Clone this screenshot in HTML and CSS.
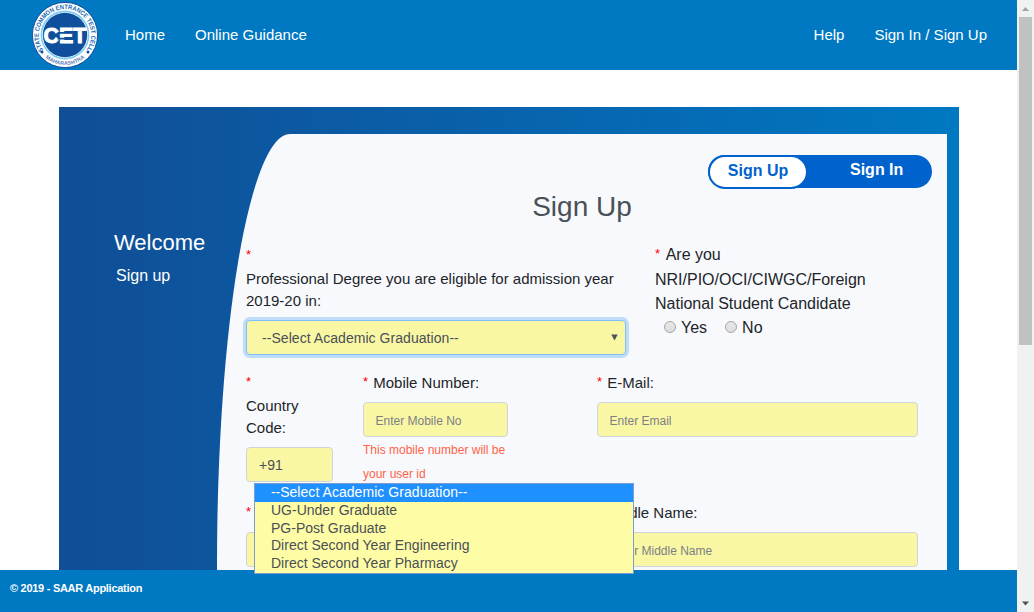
FILE: index.html
```html
<!DOCTYPE html>
<html lang="en">
<head>
<meta charset="utf-8">
<title>Sign Up</title>
<link rel="stylesheet" href="styles.css">
</head>
<body>
<div class="page">
  <header class="topbar">
    <svg class="logo" width="68" height="68" viewBox="-34 -34 68 68">
      <defs>
        <path id="arcTop" d="M-20.2 16.9 A26.2 26.2 0 1 1 20.2 16.9"/>
        <path id="arcBottom" d="M-22.2 20.3 A30.1 30.1 0 0 0 22.2 20.3"/>
      </defs>
      <circle r="32.6" fill="#fff" stroke="#1450a0" stroke-width="1"/>
      <circle r="23.6" fill="none" stroke="#7fcdf2" stroke-width="1.6"/>
      <circle r="22.2" fill="#0f4f9b"/>
      <text class="ring-text"><textPath href="#arcTop" textLength="113" lengthAdjust="spacingAndGlyphs" startOffset="2">STATE COMMON ENTRANCE TEST CELL</textPath></text>
      <text class="ring-text ring-low"><textPath href="#arcBottom" textLength="43" startOffset="3.5">MAHARASHTRA</textPath></text>
      <circle cx="-23" cy="17" r="1.5" fill="#1450a0"/>
      <circle cx="23" cy="17" r="1.5" fill="#1450a0"/>
      <text class="cet" x="-21.5" y="8.3" textLength="43" lengthAdjust="spacingAndGlyphs">CET</text>
      <path d="M-7.5 -2.2H7M-7.5 3.7H7" stroke="#0f4f9b" stroke-width="1.8"/>
    </svg>
    <nav class="nav">
      <a class="home">Home</a>
      <a>Online Guidance</a>
    </nav>
    <nav class="nav account">
      <a class="help">Help</a>
      <a>Sign In / Sign Up</a>
    </nav>
  </header>

  <main class="main">
    <section class="panel">
      <aside class="side">
        <h2>Welcome</h2>
        <p>Sign up</p>
      </aside>
      <div class="card">
        <div class="switch"><span class="on">Sign Up</span><span class="off">Sign In</span></div>
        <h1>Sign Up</h1>
        <form class="form">
          <div class="row row-degree">
            <div class="field">
              <i class="req req-line">*</i>
              <label class="tight">Professional Degree you are eligible for admission year<br>2019-20 in:</label>
              <div class="control select"><span>--Select Academic Graduation--</span>
                <svg width="7" height="7" viewBox="0 0 7 7"><path d="M.3 .5H6.7L3.5 6.5Z" fill="#495057"/></svg>
              </div>
            </div>
            <div class="field nri">
              <div><i class="req">*</i> Are you</div>
              <div>NRI/PIO/OCI/CIWGC/Foreign</div>
              <div>National Student Candidate</div>
              <div class="radios"><b class="radio"></b><span>Yes</span><b class="radio second"></b><span>No</span></div>
            </div>
          </div>
          <div class="row row-contact">
            <div class="field">
              <i class="req req-line">*</i>
              <label class="tight">Country<br>Code:</label>
              <div class="control">+91</div>
            </div>
            <div class="field">
              <label><i class="req">*</i> Mobile Number:</label>
              <div class="control hint">Enter Mobile No</div>
              <p class="note">This mobile number will be<br>your user id</p>
            </div>
            <div class="field">
              <label><i class="req">*</i> E-Mail:</label>
              <div class="control hint">Enter Email</div>
            </div>
          </div>
          <div class="row row-name">
            <div class="field">
              <label><i class="req">*</i></label>
              <div class="control"></div>
            </div>
            <div class="field">
              <label class="middle">Middle Name:</label>
              <div class="control hint">Enter Middle Name</div>
            </div>
          </div>
        </form>
      </div>
    </section>
  </main>

  <footer class="footer">© 2019 - SAAR Application</footer>

  <ul class="options">
    <li class="active"><span class="dash">--</span>Select Academic Graduation<span class="dash">--</span></li>
    <li>UG-Under Graduate</li>
    <li>PG-Post Graduate</li>
    <li>Direct Second Year Engineering</li>
    <li>Direct Second Year Pharmacy</li>
  </ul>
</div>
<div class="scrollbar">
  <svg width="17" height="17" viewBox="0 0 17 17"><path d="M5 11L8.5 7L12 11Z" fill="#a3a3a3"/></svg>
  <div class="thumb"></div>
  <svg class="down" width="17" height="17" viewBox="0 0 17 17"><path d="M5 6.5H12L8.5 10.5Z" fill="#505050"/></svg>
</div>
</body>
</html>
```
FILE: styles.css
```css
* { box-sizing: border-box; }
body {
  margin: 0; width: 1034px; height: 612px; overflow: hidden; display: flex;
  font-family: "Liberation Sans", Arial, sans-serif; color: #212529; background: #fff;
}
h1, h2, p, ul { margin: 0; padding: 0; font-weight: 400; list-style: none; }
.page { position: relative; width: 1017px; height: 612px; display: flex; flex-direction: column; }
.topbar { height: 70px; flex: none; display: flex; align-items: center; padding: 0 30px 0 31px; background: #0078c2; }
.logo { flex: none; }
.ring-text { font-size: 6.4px; font-weight: 700; fill: #1b6ab4; }
.ring-low { font-size: 5.4px; fill: #5f80b8; }
.cet { font-size: 22px; font-weight: 700; fill: #fff; stroke: #fff; stroke-width: 1; }
.nav { display: flex; margin-left: 26px; color: #fff; font-size: 15px; line-height: 20px; }
.home, .help { margin-right: 30px; }
.account { margin-left: auto; }

.main { height: 500px; flex: none; overflow: hidden; padding: 37px 58px 0 59px; }
.panel { height: 463px; display: flex; padding: 27px 12px 0 0; background: linear-gradient(to right, #104e96, #0078c2); }
.side { width: 158px; padding-top: 95px; color: #fff; }
.side h2 { padding-left: 55px; font-size: 22px; line-height: 28px; }
.side p { padding-left: 57px; margin-top: 8px; font-size: 16px; line-height: 22px; }
.card { width: 730px; height: 436px; flex: none; padding-top: 21px; background: #f8f9fc; border-top-left-radius: 73px 431px; }

.switch { width: 224px; height: 33px; margin-left: 491px; display: flex; border-radius: 17px; background: #0062cc; color: #fff; font-size: 16px; font-weight: 700; }
.on { width: 100px; height: 34px; border: 2px solid #0062cc; border-radius: 17px; background: #fff; color: #0062cc; text-align: center; line-height: 28px; }
.off { padding-left: 42px; line-height: 29px; }
h1 { margin-top: 2px; font-size: 28px; line-height: 34px; text-align: center; color: #495057; }

.form { padding: 20px 29px 0; font-size: 15px; }
.row { display: grid; align-items: start; }
.row-degree { height: 127px; grid-template-columns: 380px 234px; column-gap: 29px; }
.row-contact { height: 130px; grid-template-columns: 87px 145px 321px; column-gap: 30px; }
.row-contact .field:last-child { margin-left: 59px; width: 321px; }
.row-name { height: 80px; grid-template-columns: 321px 321px; column-gap: 30px; }
.field label { display: block; height: 31px; line-height: 24px; }
.field label.tight { height: auto; line-height: 22px; padding-bottom: 8px; }
.req { display: inline-block; margin-right: 1px; color: #f00; font-style: normal; font-size: 13px; transform: translateY(-2px); }
.req-line { display: block; height: 24px; line-height: 26px; }
.control { height: 35px; padding: 0 12px; border: 1px solid #ced4da; border-radius: 4px; background: #faf7a4; color: #495057; font-size: 14px; line-height: 34px; white-space: nowrap; }
.hint { padding-left: 11.5px; font-size: 12px; color: #7c8084; line-height: 36px; }
.select { display: flex; justify-content: space-between; padding: 0 7px 0 15px; border-color: #80bdff; box-shadow: 0 0 0 3px #bfdcfb; line-height: 35px; letter-spacing: .05px; }
.select svg { margin-top: 13px; }
.nri { font-size: 16px; line-height: 24px; margin-top: -1px; }
.nri .req { margin-right: 2px; }
.radios { display: flex; }
.radio { width: 12px; height: 12px; margin: 5px 5px 0 9px; border: 1px solid #a6a6a6; border-radius: 50%; background: linear-gradient(#e8e8e8, #dcdcdc); }
.second { margin-left: 18px; }
.note { padding-top: 1px; font-size: 12px; line-height: 24px; color: #ff6347; }
.middle { padding-left: 8px; }

.footer { height: 42px; flex: none; padding-left: 10px; background: #0078c2; color: #fff; font-size: 11px; font-weight: 700; line-height: 37px; letter-spacing: -.28px; }
.options { position: absolute; left: 254px; top: 483px; width: 380px; height: 91px; border: 1px solid #7a9cd0; background: #fffca6; color: #495057; font-size: 14px; }
.options li { height: 17.7px; line-height: 17px; padding-left: 16px; }
.options .active { height: 18px; background: #1e90ff; color: #fff; }
.dash { letter-spacing: -.1px; }
.options .active { letter-spacing: .05px; }

.scrollbar { width: 17px; height: 612px; background: #f1f1f1; display: flex; flex-direction: column; }
.thumb { width: 13px; height: 328px; margin-left: 2px; background: #c1c1c1; }
.down { margin-top: auto; }
```
